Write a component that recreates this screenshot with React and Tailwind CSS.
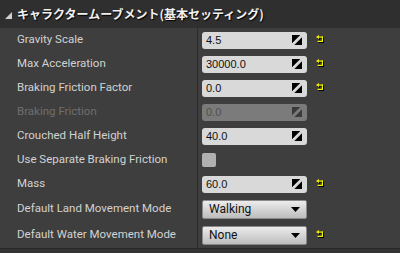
import React from "react";

const Spin = ({ color = "#000" }) => (
  <svg width="10" height="10" viewBox="0 0 10 10" className="shrink-0">
    <polygon points="0,0 8.3,0 0,8.3" fill={color} />
    <polygon points="10,2.3 10,10 2.3,10" fill={color} />
  </svg>
);

const Reset = () => (
  <svg width="10" height="10" viewBox="0 0 10 10" className="shrink-0">
    <g transform="translate(1,1)" fill="#000">
      <polygon points="0,2 3,0 3,4" />
      <rect x="2.5" y="1.5" width="4.5" height="1.2" />
      <rect x="5.8" y="1.5" width="1.2" height="5.5" />
      <rect x="1.5" y="5.8" width="5.5" height="1.2" />
    </g>
    <g fill="#f2f200">
      <polygon points="0,2 3,0 3,4" />
      <rect x="2.5" y="1.5" width="4.5" height="1.2" />
      <rect x="5.8" y="1.5" width="1.2" height="5.5" />
      <rect x="1.5" y="5.8" width="5.5" height="1.2" />
    </g>
  </svg>
);

const Arrow = () => (
  <svg width="9" height="5" viewBox="0 0 9 5" className="shrink-0">
    <polygon points="0,0 9,0 4.5,5" fill="#000" />
  </svg>
);

function NumBox({ value, disabled }) {
  return (
    <div
      className={
        "flex h-[17px] w-[105px] items-center justify-between rounded-[3px] pl-[4px] pr-[5px] text-[11px] " +
        (disabled ? "bg-[#7b7b7b] text-[#505050]" : "bg-[#d9d9d9] text-[#111]")
      }
      style={{ fontFamily: "'Liberation Sans', Arial, sans-serif" }}
    >
      <span>{value}</span>
      <Spin color={disabled ? "#3a3a3a" : "#000"} />
    </div>
  );
}

function Drop({ value }) {
  return (
    <div
      className="flex h-[19px] w-[105px] items-center justify-between rounded-[2px] border border-[#8a8a8a] bg-gradient-to-b from-[#ececec] to-[#bdbdbd] pl-[6px] pr-[6px] text-[12px] text-[#111]"
      style={{ fontFamily: "Roboto, sans-serif" }}
    >
      <span>{value}</span>
      <Arrow />
    </div>
  );
}

function Row({ label, disabled, h = "h-[24px]", children, reset }) {
  return (
    <div className={"flex " + h}>
      <div
        className={
          "flex w-[198px] items-center border-r border-[#2b2b2b] pl-[17px] text-[11.5px] " +
          (disabled ? "text-[#6f6f6f]" : "text-[#d2d2d2]")
        }
      >
        {label}
      </div>
      <div className="flex flex-1 items-center pl-[4px]">
        {children}
        {reset && (
          <span className="ml-[9px] flex items-center">
            <Reset />
          </span>
        )}
      </div>
    </div>
  );
}

export default function App() {
  return (
    <div
      className="flex h-[253px] w-[400px] flex-col overflow-hidden bg-[#3e3e3e]"
      style={{ fontFamily: "Roboto, 'Noto Sans', 'Noto Sans CJK JP', sans-serif" }}
    >
      <div className="flex h-[28px] shrink-0 items-center bg-[#2f2f2f] pl-[5px]">
        <svg width="7" height="7" viewBox="0 0 7 7" className="mr-[5px] mt-[2px]">
          <polygon points="7,0 7,7 0,7" fill="#cfcfcf" />
        </svg>
        <span
          className="text-[12px] font-bold text-[#f0f0f0]"
          style={{
            fontFamily: "'Noto Sans CJK JP', sans-serif",
            textShadow: "1px 1px 1px #000",
          }}
        >
          キャラクタームーブメント(基本セッティング)
        </span>
      </div>
      <Row label="Gravity Scale" reset>
        <NumBox value="4.5" />
      </Row>
      <Row label="Max Acceleration" reset>
        <NumBox value="30000.0" />
      </Row>
      <Row label="Braking Friction Factor" reset>
        <NumBox value="0.0" />
      </Row>
      <Row label="Braking Friction" disabled>
        <NumBox value="0.0" disabled />
      </Row>
      <Row label="Crouched Half Height">
        <NumBox value="40.0" />
      </Row>
      <Row label="Use Separate Braking Friction">
        <div className="h-[14px] w-[14px] rounded-[2px] bg-[#b0b0b0]" />
      </Row>
      <Row label="Mass" reset>
        <NumBox value="60.0" />
      </Row>
      <Row label="Default Land Movement Mode" h="h-[26px]">
        <Drop value="Walking" />
      </Row>
      <Row label="Default Water Movement Mode" h="h-[26px]" reset>
        <Drop value="None" />
      </Row>
      <div className="flex-1 border-t border-[#262626] bg-[#333333]" />
    </div>
  );
}
